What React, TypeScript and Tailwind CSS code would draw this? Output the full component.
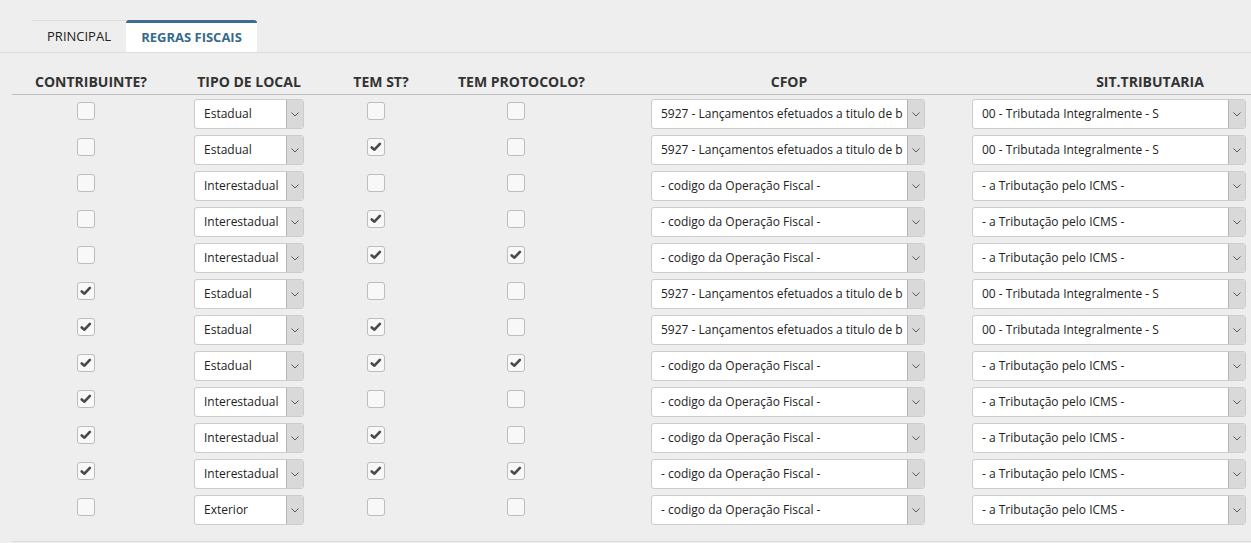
import React from "react";

type Row = {
  contrib: boolean;
  local: string;
  st: boolean;
  prot: boolean;
  cfop: string;
  sit: string;
};

const CFOP_5927 = "5927 - Lançamentos efetuados a titulo de b";
const CFOP_NONE = "- codigo da Operação Fiscal -";
const SIT_00 = "00 - Tributada Integralmente - S";
const SIT_NONE = "- a Tributação pelo ICMS -";

const rows: Row[] = [
  { contrib: false, local: "Estadual", st: false, prot: false, cfop: CFOP_5927, sit: SIT_00 },
  { contrib: false, local: "Estadual", st: true, prot: false, cfop: CFOP_5927, sit: SIT_00 },
  { contrib: false, local: "Interestadual", st: false, prot: false, cfop: CFOP_NONE, sit: SIT_NONE },
  { contrib: false, local: "Interestadual", st: true, prot: false, cfop: CFOP_NONE, sit: SIT_NONE },
  { contrib: false, local: "Interestadual", st: true, prot: true, cfop: CFOP_NONE, sit: SIT_NONE },
  { contrib: true, local: "Estadual", st: false, prot: false, cfop: CFOP_5927, sit: SIT_00 },
  { contrib: true, local: "Estadual", st: true, prot: false, cfop: CFOP_5927, sit: SIT_00 },
  { contrib: true, local: "Estadual", st: true, prot: true, cfop: CFOP_NONE, sit: SIT_NONE },
  { contrib: true, local: "Interestadual", st: false, prot: false, cfop: CFOP_NONE, sit: SIT_NONE },
  { contrib: true, local: "Interestadual", st: true, prot: false, cfop: CFOP_NONE, sit: SIT_NONE },
  { contrib: true, local: "Interestadual", st: true, prot: true, cfop: CFOP_NONE, sit: SIT_NONE },
  { contrib: false, local: "Exterior", st: false, prot: false, cfop: CFOP_NONE, sit: SIT_NONE },
];

function Check({ checked }: { checked: boolean }) {
  return (
    <span className="flex size-[18px] items-center justify-center rounded-[3px] border border-[#bdbdbd] bg-[#f8f8f8]">
      {checked && (
        <svg viewBox="0 0 18 18" className="size-[14px]">
          <path
            d="M3.5 9.5 L7 12.5 L14 5"
            fill="none"
            stroke="#4a4a4a"
            strokeWidth="3.4"
            strokeLinecap="round"
            strokeLinejoin="round"
          />
        </svg>
      )}
    </span>
  );
}

function Select({ value, width }: { value: string; width: string }) {
  return (
    <div
      className={`flex h-[30px] ${width} overflow-hidden rounded-[3px] border border-[#cccccc] bg-white`}
    >
      <span className="min-w-0 flex-1 self-center overflow-hidden whitespace-nowrap pl-[9px] text-[12px] text-[#222]">
        {value}
      </span>
      <span className="flex w-[17px] shrink-0 items-center justify-center border-l border-[#b5b5b5] bg-[#d9d9d9]">
        <svg viewBox="0 0 8 5" className="h-[5px] w-[8px]">
          <path d="M0.5 0.5 L4 4 L7.5 0.5" fill="none" stroke="#5a5a5a" strokeWidth="1" />
        </svg>
      </span>
    </div>
  );
}

export default function App() {
  return (
    <div
      className="h-[543px] w-full overflow-hidden bg-[#eeeeee] text-[#333]"
      style={{ fontFamily: '"Open Sans", "Liberation Sans", sans-serif' }}
    >
      {/* Tabs */}
      <div className="flex border-b border-[#dcdcdc] pl-[32px] pt-[20px]">
        <div className="flex h-[32px] w-[94px] items-center justify-center border-t border-[#dedede] text-[13px] text-[#222]">
          PRINCIPAL
        </div>
        <div className="flex h-[32px] w-[131px] items-center justify-center rounded-t-[3px] border-t-[3px] border-[#3b6e8f] bg-white text-[13px] font-bold text-[#356a8c]">
          REGRAS FISCAIS
        </div>
      </div>

      {/* Tabela */}
      <div className="ml-[12px]">
        <div className="flex h-[42px] items-end border-b border-[#bdbdbd] pb-[2px] text-[14px] font-bold leading-[20px] text-[#333]">
          <div className="w-[158px] shrink-0 text-center">CONTRIBUINTE?</div>
          <div className="w-[158px] shrink-0 text-center">TIPO DE LOCAL</div>
          <div className="w-[106px] shrink-0 text-center">TEM ST?</div>
          <div className="w-[175px] shrink-0 text-center">TEM PROTOCOLO?</div>
          <div className="w-[360px] shrink-0 text-center">CFOP</div>
          <div className="w-[362px] shrink-0 text-center">SIT.TRIBUTARIA</div>
        </div>

        <div className="border-b border-[#dcdcdc] pb-[13px] pt-[1px]">
          {rows.map((r, i) => (
            <div key={i} className="flex h-[36px] items-center">
              <div className="w-[158px] shrink-0 self-start pl-[65px] pt-[6px]">
                <Check checked={r.contrib} />
              </div>
              <div className="w-[158px] shrink-0 pl-[24px]">
                <Select value={r.local} width="w-[110px]" />
              </div>
              <div className="w-[106px] shrink-0 self-start pl-[39px] pt-[6px]">
                <Check checked={r.st} />
              </div>
              <div className="w-[175px] shrink-0 self-start pl-[73px] pt-[6px]">
                <Check checked={r.prot} />
              </div>
              <div className="w-[360px] shrink-0 pl-[42px]">
                <Select value={r.cfop} width="w-[274px]" />
              </div>
              <div className="shrink-0 pl-[3px]">
                <Select value={r.sit} width="w-[274px]" />
              </div>
            </div>
          ))}
        </div>
      </div>
    </div>
  );
}
